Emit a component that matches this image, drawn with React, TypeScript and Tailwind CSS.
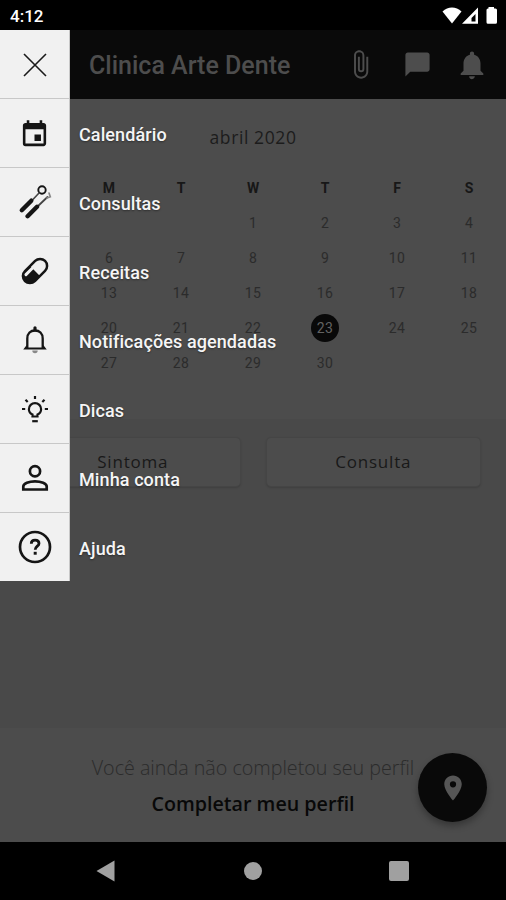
import type { ReactNode } from 'react'
import { MdAttachFile, MdChatBubble, MdEvent, MdNotifications, MdPlace } from 'react-icons/md'

const weekDays = ['S', 'M', 'T', 'W', 'T', 'F', 'S']

// The Sunday column sits behind the open menu, its days are not shown
const weeks = [
  ['', '', '', '1', '2', '3', '4'],
  ['', '6', '7', '8', '9', '10', '11'],
  ['', '13', '14', '15', '16', '17', '18'],
  ['', '20', '21', '22', '23', '24', '25'],
  ['', '27', '28', '29', '30', '', ''],
]

const CloseIcon = () => (
  <svg width="24" height="24" viewBox="0 0 24 24" stroke="#1a1a1a" strokeWidth="1.6">
    <path d="M1 1L23 23M23 1L1 23" />
  </svg>
)

// Dental mirror and probe
const ToolsIcon = () => (
  <svg width="34" height="34" viewBox="0 0 34 34" fill="none" stroke="#151515" strokeLinecap="round">
    <circle cx="24" cy="5" r="3.7" strokeWidth="1.9" />
    <path d="M21 8L14 15.5" strokeWidth="1.6" stroke="#444" />
    <path d="M13.3 15.7L3.8 25.2" strokeWidth="4.4" />
    <path d="M19.5 21.5L29.5 12" strokeWidth="1.8" stroke="#444" />
    <path d="M19 21.8L9.6 31.2" strokeWidth="4.4" />
    <path d="M29 13L32.3 11.8L31 8" strokeWidth="1.7" stroke="#888" />
  </svg>
)

const PillIcon = () => (
  <svg width="28" height="28" viewBox="0 0 28 28">
    <g transform="rotate(-45 14 14)">
      <path d="M7 7H14V21H7A7 7 0 0 1 7 7Z" fill="#151515" />
      <rect x="-0.2" y="7" width="28.4" height="14" rx="7" fill="none" stroke="#151515" strokeWidth="2.5" />
      <path d="M5 10.2H14" stroke="#f1f1f1" strokeWidth="3" strokeLinecap="round" />
    </g>
  </svg>
)

const BellIcon = () => (
  <svg width="26" height="28" viewBox="0 0 26 28" fill="none" stroke="#151515" strokeWidth="2.3">
    <path d="M13 1.8V4" strokeWidth="3.2" strokeLinecap="round" />
    <path d="M5.3 22V12.5C5.3 7.5 8.6 4.5 13 4.5S20.7 7.5 20.7 12.5V22" />
    <path d="M5.3 19.8L3.2 22.5H22.8L20.7 19.8" strokeWidth="1.9" />
    <path d="M10.3 24.5A2.7 2.7 0 0 0 15.7 24.5Z" fill="#888" stroke="none" />
  </svg>
)

const BulbIcon = () => (
  <svg width="28" height="28" viewBox="0 0 28 28" fill="none" stroke="#151515" strokeWidth="2.2">
    <path d="M11.5 21.5V19.5C9 18.4 7.9 16.5 7.9 14.2A6.1 6.1 0 0 1 20.1 14.2C20.1 16.5 19 18.4 16.5 19.5V21.5Z" />
    <path d="M11.2 26.2H16.8" />
    <path d="M14 1V4M1 14H4.2M23.8 14H27M4.5 4.8L6.7 7M23.5 4.8L21.3 7" />
  </svg>
)

const PersonIcon = () => (
  <svg width="28" height="28" viewBox="0 0 28 28" fill="none" stroke="#151515" strokeWidth="2.7">
    <circle cx="14" cy="7.2" r="5.1" />
    <path d="M2.3 25.5V22.5C2.3 19.5 8 17.3 14 17.3S25.7 19.5 25.7 22.5V25.5Z" />
  </svg>
)

const HelpIcon = () => (
  <svg width="34" height="34" viewBox="0 0 34 34" fill="none" stroke="#151515">
    <circle cx="17" cy="17" r="15" strokeWidth="2.7" />
    <path d="M13.3 13.8C13.3 11.4 14.9 10.1 17.1 10.1S21 11.4 21 13.4C21 16.1 17.2 16.2 17.2 19.8" strokeWidth="2.8" />
    <path d="M15.7 21.8H18.7V24.7H15.7Z" fill="#151515" stroke="none" />
  </svg>
)

const menuItems = [
  { label: 'Calendário', icon: <MdEvent size={31} className="mt-[3px]" /> },
  { label: 'Consultas', icon: <ToolsIcon /> },
  { label: 'Receitas', icon: <PillIcon /> },
  { label: 'Notificações agendadas', icon: <BellIcon /> },
  { label: 'Dicas', icon: <BulbIcon /> },
  { label: 'Minha conta', icon: <PersonIcon /> },
  { label: 'Ajuda', icon: <HelpIcon /> },
]

export default function App() {
  return (
    <div className="relative flex h-[900px] w-[506px] flex-col overflow-hidden bg-[#494949] font-['Roboto',sans-serif]">
      <StatusBar />

      <header className="flex h-[69px] shrink-0 items-center bg-[#0a0a0a] pl-[89px] text-[#4d4d4d]">
        <h1 className="w-[256px] pt-[3px] text-[25px] font-medium whitespace-nowrap">Clinica Arte Dente</h1>
        <MdAttachFile size={31} className="shrink-0" />
        <MdChatBubble size={29} className="ml-[27px] shrink-0" />
        <MdNotifications size={34} className="ml-[23px] shrink-0" />
      </header>

      <Calendar />

      <div className="flex h-[69px] gap-[25px] px-[25px] pt-[18px] font-['Open_Sans',sans-serif]">
        <ActionButton>Sintoma</ActionButton>
        <ActionButton>Consulta</ActionButton>
      </div>

      <footer className="mt-auto flex h-[114px] shrink-0 flex-col items-center bg-[#4c4c4c] pt-[26px] font-['Open_Sans',sans-serif]">
        <p className="text-[19.7px] leading-[28px] font-light whitespace-nowrap text-[#2b2b2b]">Você ainda não completou seu perfil</p>
        <p className="mt-[8px] text-[19.7px] leading-[28px] font-semibold whitespace-nowrap text-[#080808]">Completar meu perfil</p>
      </footer>

      <div className="absolute top-[753px] left-[418px] flex size-[69px] items-center justify-center rounded-full bg-[#090909] text-[#565656] shadow-[0_4px_7px_rgba(0,0,0,0.3)]">
        <MdPlace size={30} />
      </div>

      <nav className="flex h-[58px] shrink-0 items-center bg-black pl-[96px]">
        <svg width="19" height="22" viewBox="0 0 19 22" fill="#a0a0a0">
          <path d="M0.5 11L18.5 0.5V21.5Z" />
        </svg>
        <div className="ml-[129px] size-[18px] rounded-full bg-[#a0a0a0]" />
        <div className="ml-[127px] size-[20px] rounded-[2px] bg-[#a0a0a0]" />
      </nav>

      <SideMenu />
    </div>
  )
}

function StatusBar() {
  return (
    <div className="flex h-[30px] shrink-0 items-center justify-between bg-black pr-[8px] pl-[10px] text-white">
      <span className="pt-[3px] text-[17px] font-medium">4:12</span>
      <svg width="56" height="18" viewBox="0 0 56 18" fill="#ffffff">
        <path d="M0.5 5.5C6 0.2 14 0.2 19.5 5.5L10 17.5Z" />
        <path fillRule="evenodd" d="M20 17.7L36 1.5V17.7ZM29.5 15.5H33.5V8L29.5 12Z" />
        <path d="M46.5 2.5V1H52V2.5H53.5Q55 2.5 55 4V16.2Q55 17.7 53.5 17.7H46Q44.5 17.7 44.5 16.2V4Q44.5 2.5 46 2.5Z" />
      </svg>
    </div>
  )
}

function Calendar() {
  return (
    <section className="h-[320px] shrink-0 bg-[#4c4c4c] pt-[24px]">
      <h2 className="text-center font-['Open_Sans',sans-serif] text-[17.5px] leading-[28px] tracking-[0.6px] text-[#1c1c1c]">abril 2020</h2>
      <div className="mt-[23px] ml-px grid w-[504px] grid-cols-7 text-center text-[14px] leading-[28px] font-bold text-[#171717]">
        {weekDays.map((day, i) => (
          <span key={i}>{day}</span>
        ))}
      </div>
      <div className="mt-[6.5px] ml-px flex w-[504px] flex-col gap-[7.2px]">
        {weeks.map((week, i) => (
          <div key={i} className="grid grid-cols-7 justify-items-center">
            {week.map((day, j) => (
              <span
                key={j}
                className={`size-[28px] rounded-full text-center text-[14px] leading-[28px] tracking-[0.3px]
                  ${day === '23' ? 'bg-[#090909] text-[#626262]' : 'text-[#2b2b2b]'}`}
              >
                {day}
              </span>
            ))}
          </div>
        ))}
      </div>
    </section>
  )
}

function SideMenu() {
  return (
    <aside className="absolute top-[30px] left-0">
      <div className="flex h-[68px] w-[70px] items-center justify-center border-r border-[#c8c8c8] bg-[#f1f1f1] pt-[2px]">
        <CloseIcon />
      </div>
      {menuItems.map((item) => (
        <div key={item.label} className="flex h-[69px] items-center">
          <div className="flex h-full w-[70px] items-center justify-center border-t border-r border-[#c8c8c8] bg-[#f1f1f1] text-[#151515]">
            {item.icon}
          </div>
          <span className="pt-[3px] pl-[9px] text-[18px] font-medium tracking-[0.1px] whitespace-nowrap text-[#f5f5f5] [text-shadow:0_1px_2px_rgba(0,0,0,0.4)]">
            {item.label}
          </span>
        </div>
      ))}
    </aside>
  )
}

const ActionButton = ({ children }: { children: ReactNode }) => (
  <button className="h-[50px] flex-1 rounded-[5px] border border-[#454545] bg-[#4c4c4c] text-[17px] tracking-[0.8px] text-[#191919] shadow-[0_1px_2px_rgba(0,0,0,0.15)]">
    {children}
  </button>
)
